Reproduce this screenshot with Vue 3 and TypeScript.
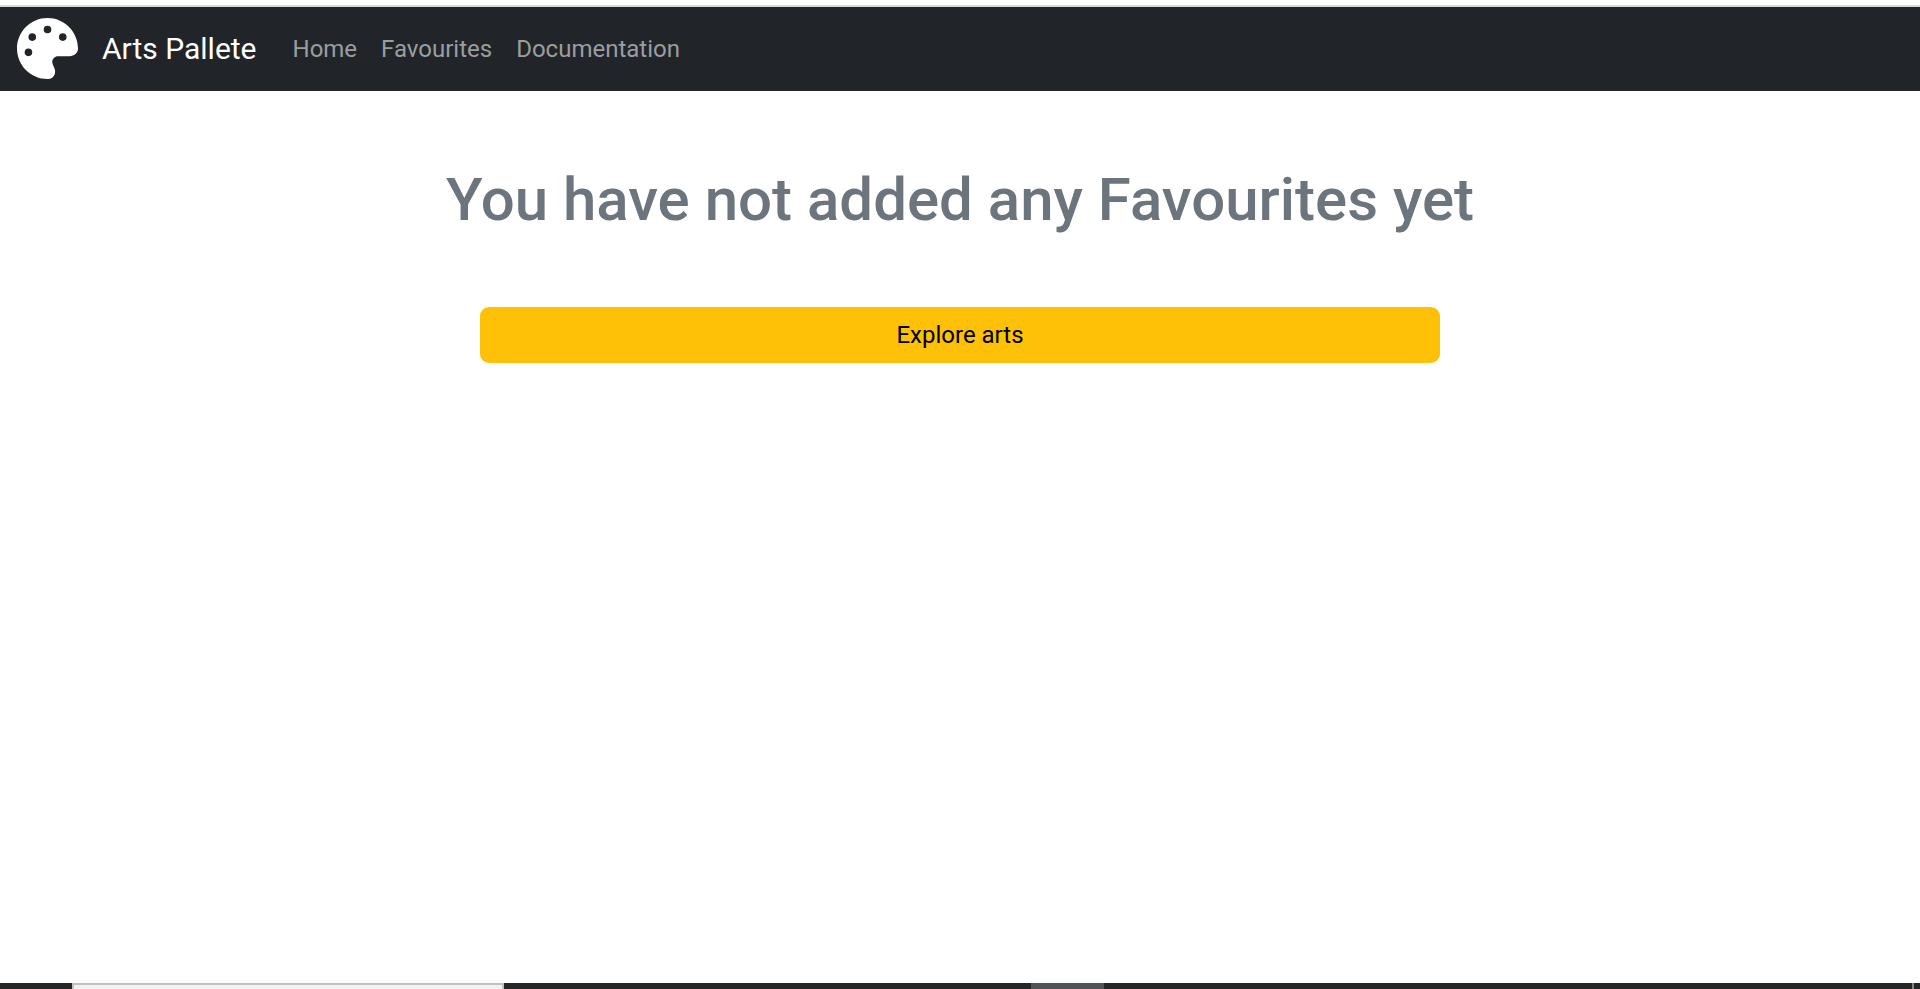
<script setup lang="ts">
interface NavLink {
  label: string
  href: string
}

const links: NavLink[] = [
  { label: 'Home', href: '#home' },
  { label: 'Favourites', href: '#favourites' },
  { label: 'Documentation', href: '#documentation' },
]
</script>

<template>
  <div class="page">
    <div class="top-edge"></div>
    <header class="navbar">
      <a class="brand" href="#home">
        <svg class="logo" viewBox="0 0 512 512" aria-hidden="true">
          <path
            fill="currentColor"
            fill-rule="evenodd"
            d="M512 256c0 .9 0 1.8 0 2.7c-.4 36.5-33.6 61.3-70.1 61.3H344c-26.5 0-48 21.5-48 48c0 3.4 .4 6.7 1 9.9c2.1 10.2 6.5 20 10.8 29.9c6.1 13.8 12.1 27.5 12.1 42c0 31.8-21.6 60.7-53.4 62c-3.5 .1-7 .2-10.6 .2C114.6 512 0 397.4 0 256S114.6 0 256 0S512 114.6 512 256zM128 288a32 32 0 1 0-64 0a32 32 0 1 0 64 0zM160 160a32 32 0 1 0-64 0a32 32 0 1 0 64 0zM288 96a32 32 0 1 0-64 0a32 32 0 1 0 64 0zM416 160a32 32 0 1 0-64 0a32 32 0 1 0 64 0z"
          />
        </svg>
        <span>Arts Pallete</span>
      </a>
      <nav class="links">
        <a v-for="link in links" :key="link.label" class="link" :href="link.href">{{ link.label }}</a>
      </nav>
    </header>

    <main class="content">
      <h1 class="title">You have not added any Favourites yet</h1>
      <button class="explore" type="button">Explore arts</button>
    </main>

    <div class="taskbar">
      <div class="search"></div>
      <div class="active-task"></div>
      <div class="divider"></div>
    </div>
  </div>
</template>

<style>
body {
  margin: 0;
  background: #fff;
}
</style>

<style scoped>
.page {
  display: flex;
  flex-direction: column;
  min-height: 100vh;
  font-family: Roboto, "Liberation Sans", sans-serif;
  font-size: 24px;
  line-height: 36px;
}

.top-edge {
  height: 5px;
  border-bottom: 2px solid #d6d9dd;
}

.navbar {
  display: flex;
  align-items: center;
  padding: 11px 17px 12px;
  background: #212529;
}

.brand {
  display: flex;
  align-items: center;
  gap: 24px;
  margin-right: 24px;
  color: #fff;
  font-size: 30px;
  line-height: 45px;
  text-decoration: none;
}

.logo {
  width: 61px;
  height: 61px;
}

.links {
  display: flex;
}

.link {
  padding: 12px;
  color: #9b9d9e;
  text-decoration: none;
}

.content {
  display: flex;
  flex: 1;
  flex-direction: column;
  align-items: center;
  padding-top: 73px;
}

.title {
  margin: 0 0 71px;
  color: #6c757d;
  font-size: 60px;
  font-weight: 500;
  line-height: 72px;
  text-align: center;
}

.explore {
  width: 50%;
  padding: 10px 18px;
  border: 0;
  border-radius: 9px;
  background: #ffc107;
  color: #000;
  font: inherit;
  cursor: pointer;
}

.taskbar {
  display: grid;
  grid-template-columns: 72fr 432fr 527fr 73fr 808fr 2px 6px;
  height: 6px;
  background: #252628;
}

.search {
  grid-column: 2;
  border: 2px solid #c1c1c1;
  border-bottom: 0;
  background: #f2f2f2;
}

.active-task {
  grid-column: 4;
  background: #525354;
}

.divider {
  grid-column: 6;
  background: #858585;
}
</style>
